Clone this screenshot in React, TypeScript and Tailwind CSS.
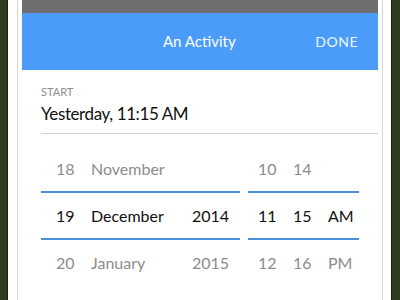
const leftRows = [
  { day: "18", month: "November", year: "", active: false },
  { day: "19", month: "December", year: "2014", active: true },
  { day: "20", month: "January", year: "2015", active: false },
];

const rightRows = [
  { hour: "10", minute: "14", half: "", active: false },
  { hour: "11", minute: "15", half: "AM", active: true },
  { hour: "12", minute: "16", half: "PM", active: false },
];

function Divider() {
  return (
    <div className="flex h-[2px] gap-[8px]">
      <div className="w-[199px] bg-[#4a8fdc]" />
      <div className="w-[111px] bg-[#4a8fdc]" />
    </div>
  );
}

function Row({ index }: { index: number }) {
  const l = leftRows[index];
  const r = rightRows[index];
  const tone = l.active ? "text-[#111111]" : "text-[#8c8c8c]";
  return (
    <div className={`flex h-[45px] items-center gap-[8px] text-[16px] ${tone}`}>
      <div className="flex w-[199px] pl-[15px]">
        <span className="w-[35px]">{l.day}</span>
        <span className="w-[101px]">{l.month}</span>
        <span>{l.year}</span>
      </div>
      <div className="flex w-[111px] pl-[10px]">
        <span className="w-[35px]">{r.hour}</span>
        <span className="w-[35px]">{r.minute}</span>
        <span>{r.half}</span>
      </div>
    </div>
  );
}

export default function App() {
  return (
    <div
      className="flex h-[300px] w-[400px] overflow-hidden bg-[#2c3c20]"
      style={{ fontFamily: "Lato, 'Noto Sans', sans-serif" }}
    >
      <div className="w-[8px] border-r border-[#18200f] bg-[#2d3e20]" />
      <div className="flex flex-1 bg-white pl-[9px] pr-[8px]">
        <div className="flex flex-1 border-x border-[#d6d6d6] px-[4px]">
          <div className="flex w-[356px] flex-col">
            <div className="h-[13px] bg-[#6e6e6e]" />
            <div className="flex h-[57px] items-center bg-[#4b9cf8] pr-[20px] text-white">
              <div className="flex-1 pl-[141px] text-[15px]">An Activity</div>
              <div className="text-[14px] tracking-[0.5px] text-white/90">DONE</div>
            </div>
            <div className="flex-1 bg-white pl-[19px]">
              <div className="pt-[15px] text-[11px] leading-[13px] text-[#8e8e8e]">START</div>
              <div className="mt-[5px] text-[17px] leading-[22px] tracking-[-0.4px] text-[#111111]">
                Yesterday, 11:15 AM
              </div>
              <div className="mt-[8px] h-[1px] bg-[#d2d2d2]" />
              <div className="pt-[12px]">
                <Row index={0} />
                <Divider />
                <Row index={1} />
                <Divider />
                <Row index={2} />
              </div>
            </div>
          </div>
        </div>
      </div>
      <div className="w-[9px] border-l border-[#18200f] bg-[#2d3e20]" />
    </div>
  );
}
